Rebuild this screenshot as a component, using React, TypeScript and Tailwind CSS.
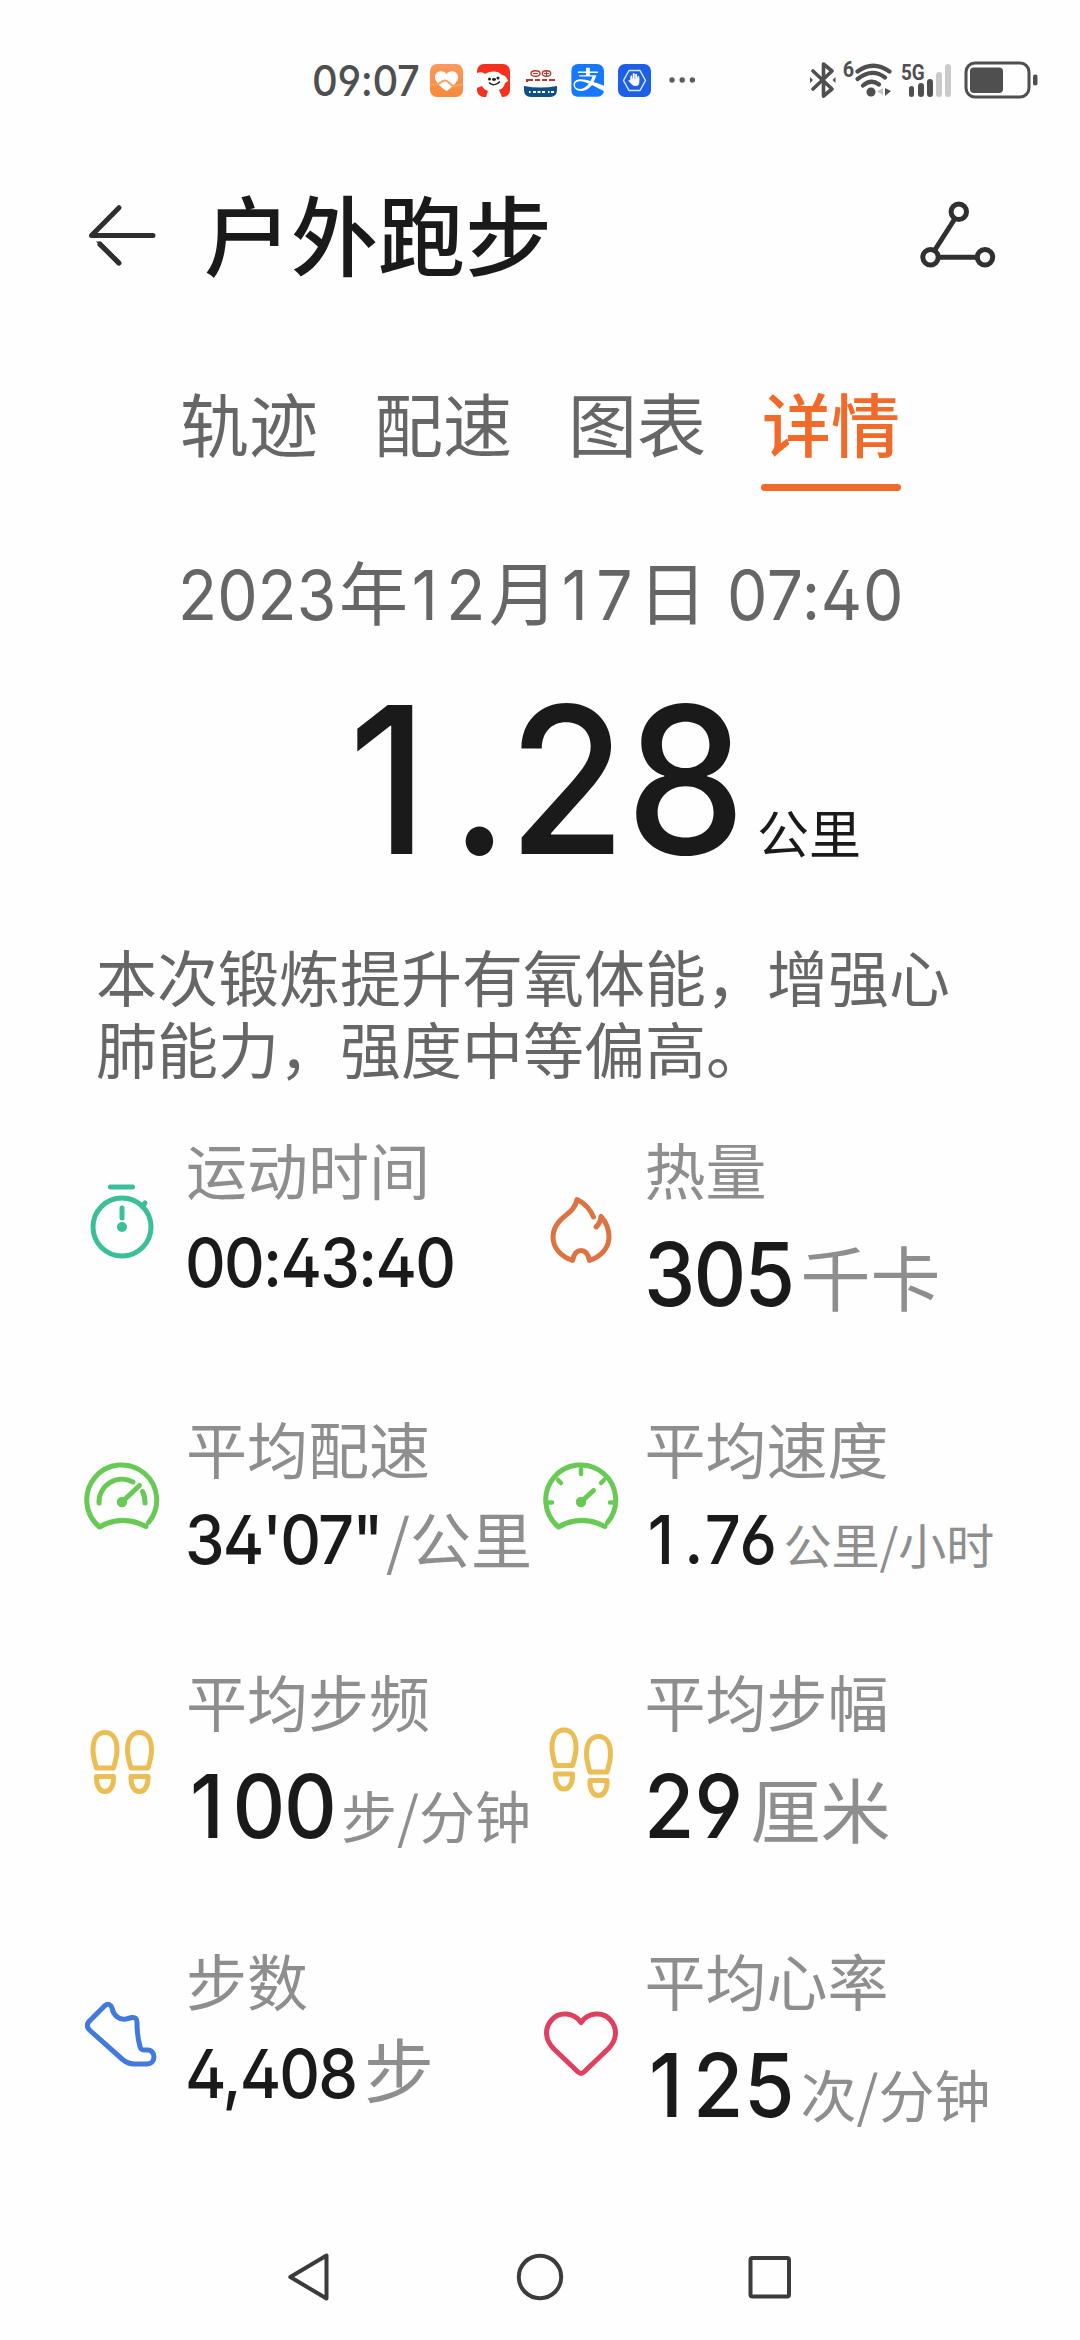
import { Fragment, type ReactNode } from "react";
import { FaAlipay } from "react-icons/fa";

type NumProps = { children: string; className: string };

/* Condensed figures; className carries the size and the width of the run.
   The digit one gets side padding so that it fills the same cell as the others. */
function Num({ children, className }: NumProps) {
  return (
    <span className={"inline-block whitespace-nowrap " + className}>
      <span className="inline-block origin-left scale-x-[0.93] font-['Inter','Noto_Sans_CJK_SC',sans-serif] [font-feature-settings:'cv02','cv03','cv04']">
        {children.split(/(1)/).map((part, i) =>
          part === "1" ? (
            <span key={i} className="pl-[0.06em] pr-[0.12em]">1</span>
          ) : (
            <Fragment key={i}>{part}</Fragment>
          )
        )}
      </span>
    </span>
  );
}

function StatusBar() {
  return (
    <div className="flex h-40 items-center">
      <Num className="ml-[312px] w-[118px] pb-[4px] text-[43px] font-medium leading-[66px] tracking-[-0.01em] text-[#4f4f4f]">09:07</Num>
      <div className="flex items-center gap-[14px]">
        <svg width="33" height="33" viewBox="0 0 33 33">
          <defs>
            <linearGradient id="health" x1="0" y1="0" x2="0" y2="1">
              <stop offset="0" stopColor="#fb9a5b" />
              <stop offset="1" stopColor="#f58a3c" />
            </linearGradient>
          </defs>
          <rect width="33" height="33" rx="7" fill="url(#health)" />
          <path d="M16.500 27C9 22 5 17 5 13c0-6 8-8 11.500-3C20 5 28 7 28 13c0 4-4 9-11.500 14z" fill="#fff" />
          <path d="M0 20.500h6c4 0 5-4 9-4s5 5.500 9 5.500c3 0 4-1.500 9-1.500" fill="none" stroke="#f9a25f" strokeWidth="2" />
        </svg>
        <svg width="33" height="33" viewBox="0 0 33 33">
          <defs>
            <clipPath id="jd"><rect width="33" height="33" rx="7" /></clipPath>
          </defs>
          <g clipPath="url(#jd)">
            <rect width="33" height="33" fill="#f5301d" />
            <path d="M0 9c3-1.500 6-1 8 1 4-3 13-4 17 1 3 0 5 3 6 6l-3 2c-1 4-3 6-6 7l3 7H9l2-6c-3-1-5-3-6-5L0 24z" fill="#fff" />
            <circle cx="12.500" cy="15" r="1.500" fill="#222" />
            <circle cx="21" cy="14" r="1.500" fill="#222" />
            <path d="M12 18.500c3 3.500 8 2.500 11-1" fill="none" stroke="#222" strokeWidth="1.500" />
            <ellipse cx="17" cy="15.500" rx="2" ry="1.400" fill="#222" />
          </g>
        </svg>
        <svg width="33" height="33" viewBox="0 0 33 33">
          <path d="M0 22q16.500 3 33 0v4q0 7-7 7H7q-7 0-7-7z" fill="#0f4f87" />
          <ellipse cx="11.500" cy="9.500" rx="4.500" ry="2.700" fill="none" stroke="#b5392f" strokeWidth="1.400" />
          <ellipse cx="22.500" cy="9.500" rx="4.200" ry="2.700" fill="none" stroke="#b5392f" strokeWidth="1.400" />
          <path d="M9 9.500h5M20 9.500h5M22.500 7v5" stroke="#b5392f" strokeWidth="1.200" />
          <path d="M3 18v-2h6M11 16h5M18 16h5M25 16h6" stroke="#b5392f" strokeWidth="2.200" fill="none" />
          <path d="M5 28h1.500M9 28h3M13.500 28h3M18 28h3M24 28h1.500M27 28h3" stroke="#fff" strokeWidth="2" />
        </svg>
        <span className="flex size-[33px] items-center justify-center overflow-hidden rounded-[7px] bg-white">
          <FaAlipay className="size-[38px] shrink-0 text-[#1677ff]" />
        </span>
        <svg width="33" height="33" viewBox="0 0 33 33">
          <rect width="33" height="33" rx="7" fill="#1d5fe6" />
          <path d="M11 6.500h11l5.500 10-5.500 10H11l-5.500-10z" fill="none" stroke="#dbe8ff" strokeWidth="1.500" strokeLinejoin="round" />
          <path d="M13.300 16v-3.500M15.700 15v-5M18.100 15v-4.200M20.300 16v-3" stroke="#fff" strokeWidth="1.900" strokeLinecap="round" />
          <path d="M12.400 14.500h8.900v4q0 3.500-4 3.500-2.500 0-4-2l-3-3.300q1-1.200 2.100 0z" fill="#fff" />
        </svg>
      </div>
      <svg className="ml-[18px]" width="26" height="8" viewBox="0 0 26 8" fill="#5b5b5b">
        <circle cx="3" cy="4" r="2.700" />
        <circle cx="13.200" cy="4" r="2.700" />
        <circle cx="23.400" cy="4" r="2.700" />
      </svg>
      <svg className="ml-[114px]" width="28" height="36" viewBox="0 0 28 36" fill="none" stroke="#4f4f4f" strokeWidth="3.600" strokeLinejoin="round" strokeLinecap="round">
        <path d="M4 9l19 18-8.500 7V2L23 9 4 27" />
        <path d="M1 15v6l3-3zM26.500 15v6l-3-3z" fill="#4f4f4f" stroke="none" />
      </svg>
      <span className="ml-[5px] -mt-[20px] font-['Roboto',sans-serif] text-[22px] font-bold leading-none text-[#4f4f4f] scale-x-90">6</span>
      <svg className="-ml-[2px]" width="42" height="36" viewBox="0 0 42 36" fill="none" stroke="#4f4f4f" strokeWidth="4.200" strokeLinecap="round">
        <path d="M4.500 9.500Q20 -2 36.500 9.500" />
        <path d="M4.500 17Q19 5.500 32 15.500" />
        <path d="M10 23.500Q18 16.500 26 22.500" />
        <circle cx="18" cy="30" r="4.500" fill="#4f4f4f" stroke="none" />
        <path d="M30 26v7l-6-3.500z" fill="#c4c4c4" stroke="none" />
        <path d="M32 26v8l6-5z" fill="#4f4f4f" stroke="none" />
      </svg>
      <div className="relative ml-[6px] h-[34px] w-[52px]">
        <span className="absolute left-0 top-[1px] origin-left scale-x-[0.86] font-['Roboto',sans-serif] text-[22px] font-bold leading-[17px] text-[#4f4f4f]">5G</span>
        <div className="flex h-full items-end gap-[3.500px] pl-[8px]">
          <i className="h-[11px] w-[5.700px] shrink-0 rounded-full bg-[#4f4f4f]" />
          <i className="h-[14px] w-[5.700px] shrink-0 rounded-full bg-[#4f4f4f]" />
          <i className="h-[18px] w-[5.700px] shrink-0 rounded-full bg-[#4f4f4f]" />
          <i className="h-[25px] w-[5.700px] shrink-0 rounded-full bg-[#cacaca]" />
          <i className="h-[33px] w-[5.700px] shrink-0 rounded-full bg-[#cacaca]" />
        </div>
      </div>
      <svg className="ml-[11px] shrink-0" width="74" height="38" viewBox="0 0 74 38">
        <rect x="2" y="2" width="63" height="34" rx="9" fill="none" stroke="#4f4f4f" strokeWidth="3" />
        <rect x="6" y="6.500" width="33" height="25.500" rx="4" fill="#4f4f4f" />
        <rect x="69" y="13.500" width="4.500" height="11" rx="2" fill="#4f4f4f" />
      </svg>
    </div>
  );
}

function Header() {
  return (
    <header className="flex h-[152px] items-center">
      <svg className="ml-[85px] shrink-0" width="74" height="66" viewBox="0 0 74 66" fill="none" stroke="#2e2e2e" strokeWidth="5" strokeLinecap="round">
        <path d="M68 32.500H6.500L34 4.700" strokeLinejoin="round" />
        <path d="M11 38.500h4.800L35.700 58.400 32.300 62z" fill="#2e2e2e" stroke="none" />
        <path d="M15 41.500l19 18.600" />
      </svg>
      <h1 className="ml-[45px] pb-[8px] text-[87px] font-medium leading-[100px] text-[#1a1a1a]">户外跑步</h1>
      <svg className="ml-auto mr-[82px]" width="80" height="80" viewBox="0 0 80 80" fill="none" stroke="#303030" strokeWidth="5">
        <circle cx="40.800" cy="15.700" r="7.700" />
        <circle cx="12.500" cy="61.300" r="7.700" />
        <circle cx="67" cy="61.300" r="7.700" />
        <path d="M37 22.500L16.500 54.500M20 61.300h39" />
      </svg>
    </header>
  );
}

function Tabs() {
  return (
    <nav className="mt-[68px] flex h-[112px] justify-center gap-[56px] text-[69px] leading-[84px] text-[#666]">
      <span>轨迹</span>
      <span>配速</span>
      <span>图表</span>
      <span className="flex flex-col font-medium text-[#f26a2a]">
        详情
        <i className="-mx-[1px] mt-[20px] h-[7px] rounded-full bg-[#f26a2a]" />
      </span>
    </nav>
  );
}

function Cell({ icon, iconTop, label, children }: { icon: ReactNode; iconTop: string; label: string; children: ReactNode }) {
  return (
    <div className="flex items-start">
      <svg className={"shrink-0 overflow-visible " + iconTop} width="80" height="80" viewBox="0 0 80 80" fill="none" strokeWidth="5" strokeLinecap="round" strokeLinejoin="round">
        {icon}
      </svg>
      <div className="ml-[24px] whitespace-nowrap">
        <div className="text-[61px] leading-[72px] text-[#8e8e8e]">{label}</div>
        <div className="-ml-px flex items-baseline text-[#8e8e8e]">{children}</div>
      </div>
    </div>
  );
}

const stopwatch = (
  <g stroke="#3abf98">
    <circle cx="40" cy="40" r="29" />
    <path d="M28.500 0h22" />
    <path d="M40 21v10" />
    <circle cx="40" cy="40" r="5" fill="#3abf98" stroke="none" />
    <path d="M60 19.500l3-3.500" />
  </g>
);

const flame = (
  <path
    stroke="#dd7343"
    d="M52.500 28C49 19.500 43 14 36 10.500C34 21.500 25 25 19 31.500C14.500 36.500 12 42 12 48C12 59 20 67.500 31.500 71.500C33 64 36 61.500 40 61.500S47 64 48.500 71.500C60 67.500 68 59 68 48C68 40 65 33 60 27.500C59.500 32.500 58 35.500 55 38"
  />
);

const gaugeBody = <path d="M66.500 60.500A35 35 0 1 0 17.500 65Q40 52 64 64.500" />;

const pace = (
  <g stroke="#68c955">
    {gaugeBody}
    <path d="M17 41A23 23 0 0 1 51 20M60.500 29.500Q63 34 63 41" />
    <path d="M40 40L57.500 23.500" />
    <circle cx="40" cy="40" r="5.200" fill="#68c955" stroke="none" />
  </g>
);

const speed = (
  <g stroke="#68c955">
    {gaugeBody}
    <path d="M40 7v5M17 18l3 3M63 18l-3 3M7 40.500h4M73 40.500h-4" strokeWidth="4.500" />
    <path d="M40 40l12.500-11.500" />
    <circle cx="40" cy="40" r="5.200" fill="#68c955" stroke="none" />
  </g>
);

const foot = (
  <>
    <path d="M14.500 46h17c1.500-5 3.500-11 3.500-18C35 17 30.500 10.500 23 10.500S11 17 11 28c0 7 2 13 3.500 18z" />
    <path d="M14.500 54.500h17c.500 8-2.500 15-8.500 15s-9-7-8.500-15z" />
  </>
);

const cadence = (
  <g stroke="#ebbd55">
    {foot}
    <g transform="translate(34.500 0)">{foot}</g>
  </g>
);

const stride = (
  <g stroke="#ebbd55">
    <g transform="translate(0 -2.500)">{foot}</g>
    <g transform="translate(34.500 4)">{foot}</g>
  </g>
);

const shoe = (
  <path
    stroke="#4179dc"
    d="M8 20.500L23 5.500c3-2.500 6-1 7 2.500 1.500 7.500 7 12 14 11l6-1.500c3.500-.500 5 1.500 5 5 0 9 1 17 3 24 .800 3 2 3.500 5 3.500h2.500C74 50 74.500 64 64.500 64H52c-4 0-8-1.500-12-5L8 30.500c-3.500-3-3.500-7 0-10z"
  />
);

const heart = (
  <path
    stroke="#e0405f"
    d="M40 21.500C33 11.500 18.500 10 11 18.500 2.500 28 4.500 39 12.500 47.500L37 71c2 1.800 4 1.800 6 0l24.500-23.500C75.500 39 77.500 28 69 18.500 61.500 10 47 11.500 40 21.500z"
  />
);

const smallNum = "text-[68px] font-medium leading-[105px] text-[#1a1a1a]";
const paceNum = "text-[68px] font-medium leading-[101px] text-[#1a1a1a]";
const largeNum = "text-[88px] font-medium leading-[125px] text-[#1a1a1a]";

function Stats() {
  return (
    <section className="ml-[82px] grid grid-cols-[458.500px_1fr] grid-rows-[279px_253px_279px_250px]">
      <Cell icon={stopwatch} iconTop="mt-[54px]" label="运动时间">
        <Num className={"w-[271px] tracking-[-0.028em] " + smallNum}>00:43:40</Num>
      </Cell>
      <Cell icon={flame} iconTop="mt-[56px]" label="热量">
        <Num className={"w-[157px] tracking-[-0.022em] " + largeNum}>305</Num>
        <span className="text-[70px] leading-none">千卡</span>
      </Cell>
      <Cell icon={pace} iconTop="mt-[50px]" label="平均配速">
        <Num className={"w-[201px] tracking-[-0.03em] " + paceNum}>34'07"</Num>
        <span className="text-[61px] leading-none">/公里</span>
      </Cell>
      <Cell icon={speed} iconTop="mt-[50px]" label="平均速度">
        <Num className={"w-[140px] tracking-[0.04em] " + paceNum}>1.76</Num>
        <span className="text-[48px] leading-none">公里/小时</span>
      </Cell>
      <Cell icon={cadence} iconTop="mt-[57px]" label="平均步频">
        <Num className={"w-[156px] tracking-[-0.015em] " + largeNum}>100</Num>
        <span className="text-[56px] leading-none">步/分钟</span>
      </Cell>
      <Cell icon={stride} iconTop="mt-[57px]" label="平均步幅">
        <Num className={"w-[107px] " + largeNum}>29</Num>
        <span className="text-[70px] leading-none">厘米</span>
      </Cell>
      <Cell icon={shoe} iconTop="mt-[56px]" label="步数">
        <Num className={"w-[179px] tracking-[-0.03em] " + smallNum}>4,408</Num>
        <span className="text-[70px] leading-none">步</span>
      </Cell>
      <Cell icon={heart} iconTop="mt-[57px]" label="平均心率">
        <Num className={"w-[157px] tracking-[0.005em] " + largeNum}>125</Num>
        <span className="text-[56px] leading-none">次/分钟</span>
      </Cell>
    </section>
  );
}

function NavBar() {
  return (
    <footer className="mt-auto flex h-[126px] items-center justify-between px-[286px] text-[#3b3b3b]">
      <svg width="46" height="50" viewBox="0 0 46 50" fill="none" stroke="currentColor" strokeWidth="4" strokeLinejoin="round">
        <path d="M4.300 25L40.500 3.500v43z" />
      </svg>
      <svg width="50" height="50" viewBox="0 0 50 50" fill="none" stroke="currentColor" strokeWidth="4">
        <circle cx="25" cy="25" r="21.200" />
      </svg>
      <svg width="46" height="46" viewBox="0 0 46 46" fill="none" stroke="currentColor" strokeWidth="4">
        <rect x="2.500" y="4" width="38.500" height="38.500" rx="2" />
      </svg>
    </footer>
  );
}

export default function App() {
  return (
    <div lang="zh-CN" className="flex h-[2340px] w-[1080px] flex-col overflow-hidden bg-[#fefefe] font-['Noto_Sans_CJK_SC',sans-serif]">
      <StatusBar />
      <Header />
      <Tabs />
      <div className="mt-[48px] ml-[178px] flex h-[100px] items-baseline whitespace-nowrap text-[69px] leading-[100px] text-[#666]">
        <Num className="w-[161px]">2023</Num>年<Num className="w-[81px] tracking-[0.01em]">12</Num>月
        <Num className="w-[80px] tracking-[0.01em]">17</Num>日
        <Num className="ml-[20px] w-[177px] tracking-[0.01em]">07:40</Num>
      </div>
      <div className="ml-[337px] flex h-[250px] items-baseline text-[#1a1a1a]">
        <Num className="w-[420px] text-[205px] font-medium leading-[250px]">1.28</Num>
        <span className="text-[52px] leading-none">公里</span>
      </div>
      <p className="mt-[50px] ml-[96px] h-[193px] w-[870px] text-[61px] leading-[72px] text-[#666]">
        本次锻炼提升有氧体能，增强心
        <br />
        肺能力，强度中等偏高。
      </p>
      <Stats />
      <NavBar />
    </div>
  );
}
